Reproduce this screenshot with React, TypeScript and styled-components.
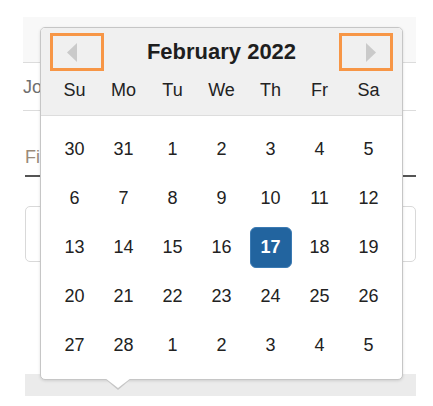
import React from "react";
import styled, { createGlobalStyle } from "styled-components";

const Global = createGlobalStyle`
  html, body { margin: 0; padding: 0; background: #ffffff; }
  body { font-family: "Liberation Sans", Arial, sans-serif; }
  * { box-sizing: border-box; }
`;

const Page = styled.div`
  position: relative;
  width: 433px;
  height: 406px;
  padding-top: 17px;
  overflow: hidden;
`;

const Form = styled.div`
  margin-left: 23px;
  width: 393px;
  display: flex;
  flex-direction: column;
`;

const TopBar = styled.div`
  height: 46px;
  background: #f8f8f8;
  border-bottom: 1px solid #dcdcdc;
`;

const TabRow = styled.div`
  height: 48px;
  display: flex;
  align-items: center;
  border-bottom: 1px solid #dcdcdc;
  padding-top: 2px;
  font-size: 18px;
  color: #6f6f6f;
`;

const FieldLabel = styled.div`
  margin: 36px 0 0 2px;
  height: 30px;
  font-size: 18px;
  color: #9a8a78;
  border-bottom: 2px solid #555555;
`;

const InputBox = styled.div`
  margin: 29px 0 0 2px;
  height: 56px;
  border: 1px solid #d9d9d9;
  border-radius: 5px;
`;

const BottomBand = styled.div`
  margin: 112px 0 0 2px;
  height: 22px;
  background: #ebebeb;
`;

const Popup = styled.div`
  position: absolute;
  left: 40px;
  top: 27px;
  width: 363px;
  background: #ffffff;
  border: 1px solid #c6c6c6;
  border-radius: 5px;
  box-shadow: 0 1px 3px rgba(0, 0, 0, 0.12);
  color: #222222;

  &::before,
  &::after {
    content: "";
    position: absolute;
    left: 64px;
    width: 0;
    height: 0;
    border-left: 13px solid transparent;
    border-right: 13px solid transparent;
  }
  &::before {
    bottom: -11px;
    border-top: 11px solid #c6c6c6;
  }
  &::after {
    bottom: -9px;
    border-top: 10px solid #ffffff;
  }
`;

const Header = styled.div`
  background: #f0f0f0;
  border-bottom: 1px solid #dddddd;
  border-radius: 4px 4px 0 0;
  padding: 0 9px 11px;
`;

const TitleRow = styled.div`
  height: 48px;
  display: flex;
  align-items: center;
  justify-content: space-between;
`;

const NavButton = styled.div<{ $dir: "prev" | "next" }>`
  width: 54px;
  height: 38px;
  border: 3px solid #f79646;
  display: flex;
  align-items: center;
  justify-content: ${(p) => (p.$dir === "prev" ? "flex-start" : "flex-end")};
  padding: 0 14px;
`;

const Title = styled.div`
  font-size: 22px;
  font-weight: bold;
  color: #1e1e1e;
`;

const Grid = styled.div`
  display: grid;
  grid-template-columns: repeat(7, 49px);
`;

const DayName = styled.div`
  height: 28px;
  display: flex;
  align-items: center;
  justify-content: center;
  font-size: 18px;
  color: #222222;
`;

const Body = styled.div`
  padding: 9px 9px 9px;
`;

const Cell = styled.div`
  height: 49px;
  display: flex;
  align-items: center;
  justify-content: center;
`;

const Day = styled.div<{ $selected?: boolean }>`
  width: 42px;
  height: 41px;
  display: flex;
  align-items: center;
  justify-content: center;
  font-size: 18px;
  border-radius: 6px;
  color: ${(p) => (p.$selected ? "#ffffff" : "#222222")};
  font-weight: ${(p) => (p.$selected ? "bold" : "normal")};
  background: ${(p) => (p.$selected ? "#22649f" : "transparent")};
  border: 1px solid ${(p) => (p.$selected ? "#3b7ab3" : "transparent")};
`;

const Arrow = ({ dir }: { dir: "prev" | "next" }) => (
  <svg width="10" height="19" viewBox="0 0 10 19">
    {dir === "prev" ? (
      <polygon points="10,0 10,19 0,9.5" fill="#cacaca" />
    ) : (
      <polygon points="0,0 0,19 10,9.5" fill="#cacaca" />
    )}
  </svg>
);

const dayNames = ["Su", "Mo", "Tu", "We", "Th", "Fr", "Sa"];
const weeks = [
  [30, 31, 1, 2, 3, 4, 5],
  [6, 7, 8, 9, 10, 11, 12],
  [13, 14, 15, 16, 17, 18, 19],
  [20, 21, 22, 23, 24, 25, 26],
  [27, 28, 1, 2, 3, 4, 5],
];

export default function App() {
  return (
    <Page>
      <Global />
      <Form>
        <TopBar />
        <TabRow>Jo</TabRow>
        <FieldLabel>Fi</FieldLabel>
        <InputBox />
        <BottomBand />
      </Form>
      <Popup>
        <Header>
          <TitleRow>
            <NavButton $dir="prev">
              <Arrow dir="prev" />
            </NavButton>
            <Title>February 2022</Title>
            <NavButton $dir="next">
              <Arrow dir="next" />
            </NavButton>
          </TitleRow>
          <Grid>
            {dayNames.map((d) => (
              <DayName key={d}>{d}</DayName>
            ))}
          </Grid>
        </Header>
        <Body>
          <Grid>
            {weeks.map((w, wi) =>
              w.map((d, di) => (
                <Cell key={`${wi}-${di}`}>
                  <Day $selected={wi === 2 && d === 17}>{d}</Day>
                </Cell>
              ))
            )}
          </Grid>
        </Body>
      </Popup>
    </Page>
  );
}
